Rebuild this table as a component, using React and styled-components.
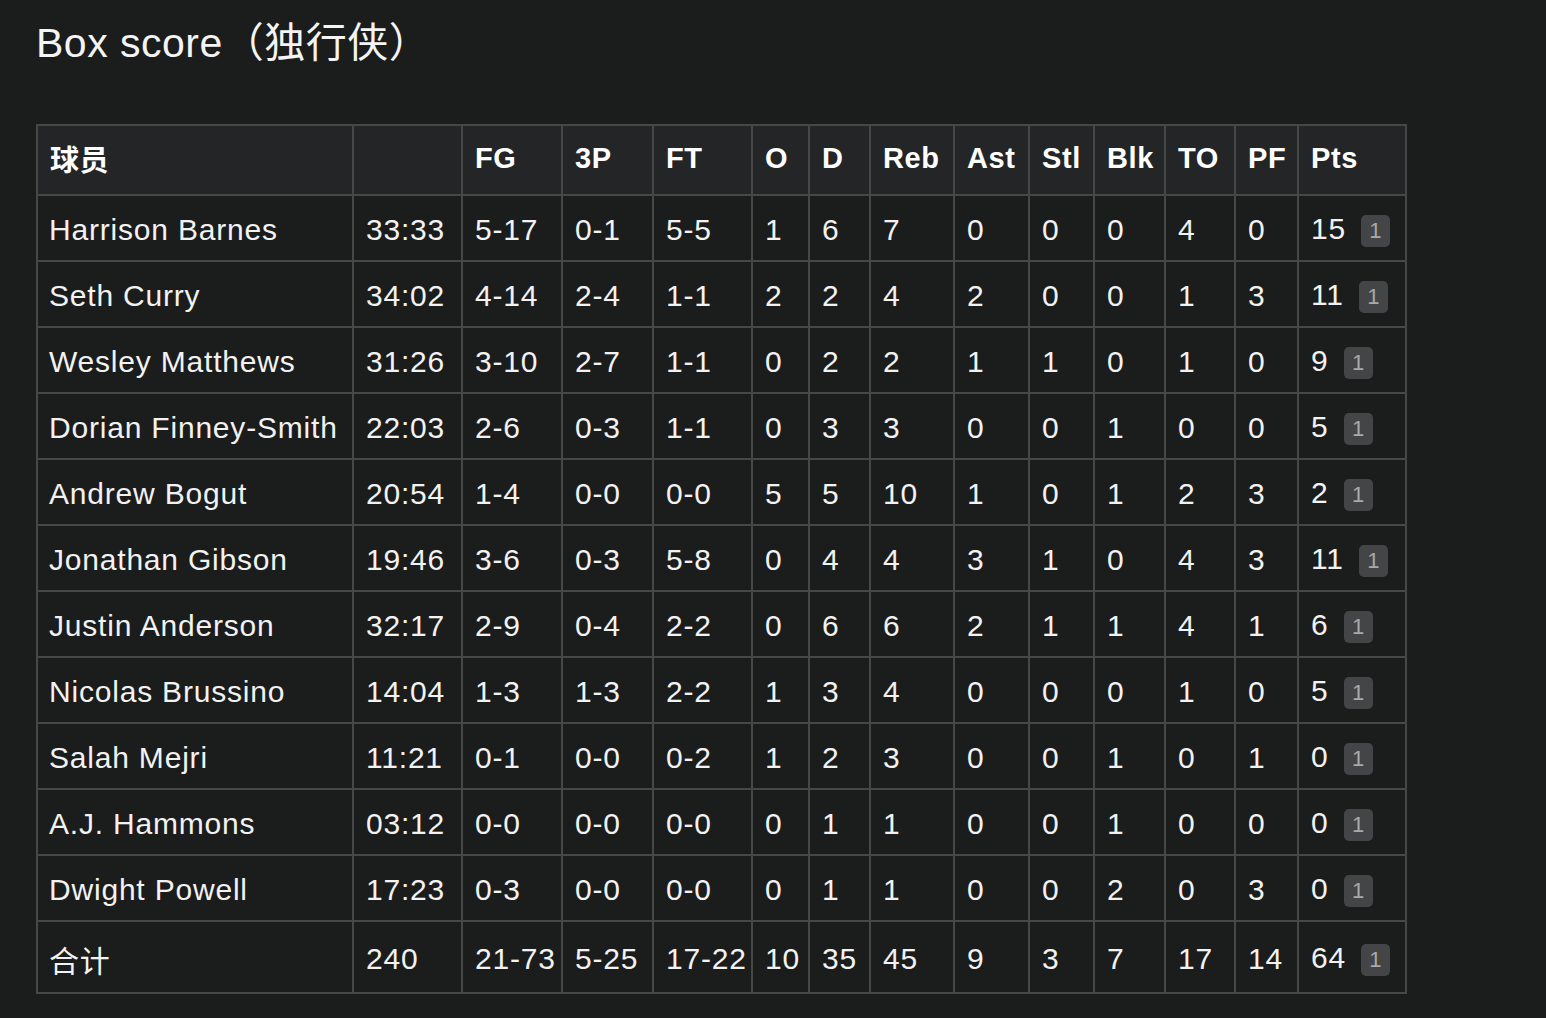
import React from "react";
import styled, { createGlobalStyle } from "styled-components";

const Global = createGlobalStyle`
  html, body { margin: 0; padding: 0; background: #1b1c1c; }
  body {
    font-family: "Liberation Sans", "Noto Sans CJK SC", Arial, sans-serif;
    color: #f2f2f2;
  }
`;

const Page = styled.div`
  min-height: 1018px;
  padding: 17px 36px 0;
  box-sizing: border-box;
  background: #1b1c1c;
`;

const Title = styled.h1`
  margin: 0;
  font-size: 41px;
  font-weight: 400;
  line-height: 52px;
  letter-spacing: 0.5px;
  color: #f4f4f4;
`;

const Table = styled.table`
  margin-top: 55px;
  border-collapse: collapse;
  table-layout: fixed;
  width: 1370px;
  border: 2px solid #464747;
  font-size: 30px;
`;

const HeadRow = styled.tr`
  height: 70px;
  background: #232527;
`;

const BodyRow = styled.tr`
  height: ${(p) => (p.$total ? 72 : 66)}px;
`;

const HeadCell = styled.th`
  border: 2px solid #464747;
  padding: 0 0 4px 12px;
  text-align: left;
  font-weight: 700;
  font-size: 29px;
  letter-spacing: 0.6px;
  color: #ffffff;
  white-space: nowrap;
  overflow: hidden;
`;

const Cell = styled.td`
  border: 2px solid #464747;
  padding: 4px 0 0 ${(p) => (p.$first ? 11 : 12)}px;
  text-align: left;
  font-weight: 400;
  letter-spacing: 0.8px;
  color: #f2f2f2;
  white-space: nowrap;
  overflow: hidden;
`;

const Badge = styled.span`
  display: inline-flex;
  align-items: center;
  justify-content: center;
  width: 29px;
  height: 32px;
  margin-left: 15px;
  border-radius: 5px;
  background: #444546;
  color: #a9a9a9;
  font-size: 22px;
  letter-spacing: 0;
  vertical-align: middle;
  position: relative;
  top: -1px;
`;

const widths = [316, 109, 100, 91, 99, 57, 61, 84, 75, 65, 71, 70, 63, 108];
const headers = ["球员", "", "FG", "3P", "FT", "O", "D", "Reb", "Ast", "Stl", "Blk", "TO", "PF", "Pts"];

const rows = [
  ["Harrison Barnes", "33:33", "5-17", "0-1", "5-5", "1", "6", "7", "0", "0", "0", "4", "0", "15"],
  ["Seth Curry", "34:02", "4-14", "2-4", "1-1", "2", "2", "4", "2", "0", "0", "1", "3", "11"],
  ["Wesley Matthews", "31:26", "3-10", "2-7", "1-1", "0", "2", "2", "1", "1", "0", "1", "0", "9"],
  ["Dorian Finney-Smith", "22:03", "2-6", "0-3", "1-1", "0", "3", "3", "0", "0", "1", "0", "0", "5"],
  ["Andrew Bogut", "20:54", "1-4", "0-0", "0-0", "5", "5", "10", "1", "0", "1", "2", "3", "2"],
  ["Jonathan Gibson", "19:46", "3-6", "0-3", "5-8", "0", "4", "4", "3", "1", "0", "4", "3", "11"],
  ["Justin Anderson", "32:17", "2-9", "0-4", "2-2", "0", "6", "6", "2", "1", "1", "4", "1", "6"],
  ["Nicolas Brussino", "14:04", "1-3", "1-3", "2-2", "1", "3", "4", "0", "0", "0", "1", "0", "5"],
  ["Salah Mejri", "11:21", "0-1", "0-0", "0-2", "1", "2", "3", "0", "0", "1", "0", "1", "0"],
  ["A.J. Hammons", "03:12", "0-0", "0-0", "0-0", "0", "1", "1", "0", "0", "1", "0", "0", "0"],
  ["Dwight Powell", "17:23", "0-3", "0-0", "0-0", "0", "1", "1", "0", "0", "2", "0", "3", "0"],
];
const total = ["合计", "240", "21-73", "5-25", "17-22", "10", "35", "45", "9", "3", "7", "17", "14", "64"];

function Row({ data, isTotal }) {
  return (
    <BodyRow $total={isTotal}>
      {data.map((v, i) => (
        <Cell key={i} $first={i === 0}>
          {v}
          {i === data.length - 1 && <Badge>1</Badge>}
        </Cell>
      ))}
    </BodyRow>
  );
}

export default function App() {
  return (
    <>
      <Global />
      <Page>
        <Title>Box score（独行侠）</Title>
        <Table>
          <colgroup>
            {widths.map((w, i) => (
              <col key={i} style={{ width: w }} />
            ))}
          </colgroup>
          <thead>
            <HeadRow>
              {headers.map((h, i) => (
                <HeadCell key={i}>{h}</HeadCell>
              ))}
            </HeadRow>
          </thead>
          <tbody>
            {rows.map((r, i) => (
              <Row key={i} data={r} />
            ))}
            <Row data={total} isTotal />
          </tbody>
        </Table>
      </Page>
    </>
  );
}
